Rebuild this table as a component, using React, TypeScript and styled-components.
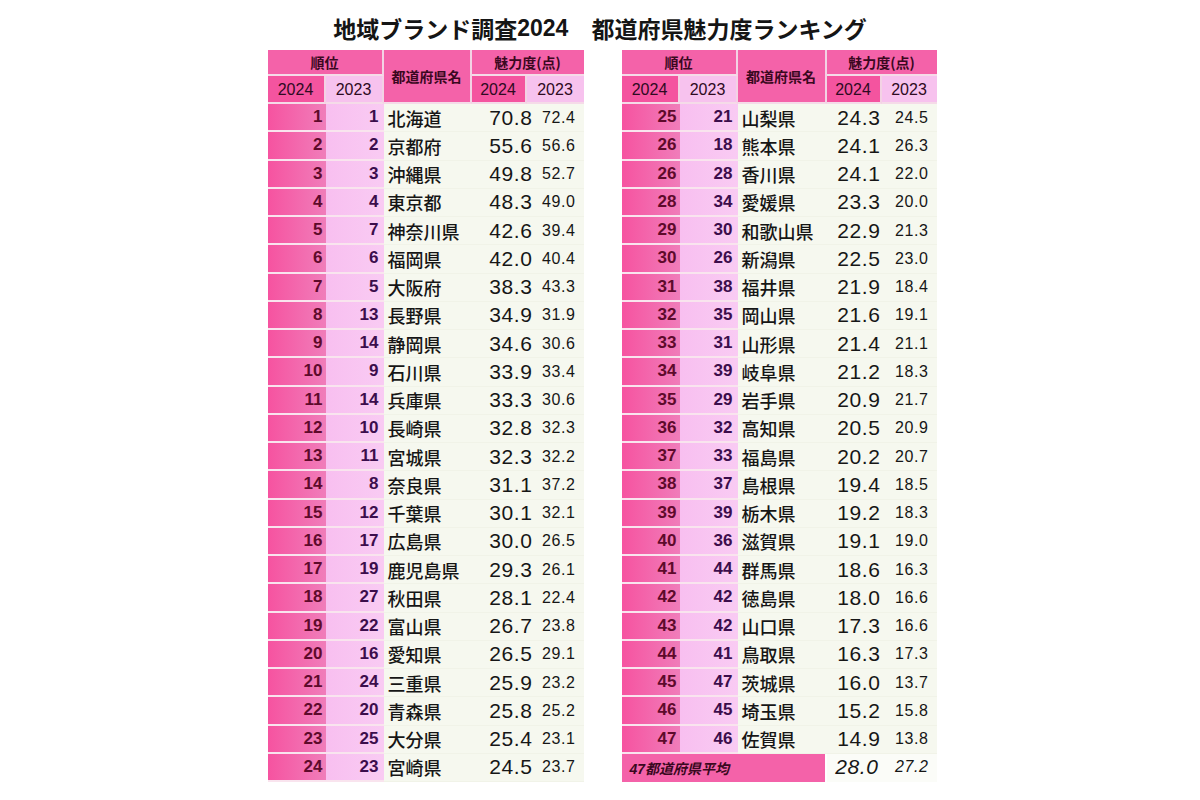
import React from "react";
import styled, { createGlobalStyle } from "styled-components";

const Global = createGlobalStyle`
  html, body { margin: 0; padding: 0; background: #ffffff; }
  body { font-family: "Liberation Sans", "Noto Sans CJK JP", sans-serif; }
`;

const Page = styled.div`
  width: 1200px;
  height: 800px;
  display: flex;
  flex-direction: column;
  align-items: center;
  overflow: hidden;
`;

const Title = styled.h1`
  margin: 0;
  height: 50px;
  display: flex;
  align-items: center;
  padding-top: 6px;
  box-sizing: border-box;
  font-family: "Noto Sans CJK JP", sans-serif;
  font-weight: 700;
  font-size: 23px;
  color: #151515;
  white-space: pre;
`;

const Num = styled.span`
  font-family: "Liberation Sans", sans-serif;
  font-weight: 700;
`;

const Tables = styled.div`
  display: flex;
  gap: 38px;
  margin-left: 4px;
`;

const Table = styled.div<{ $cols: string }>`
  display: grid;
  grid-template-columns: ${(p) => p.$cols};
  grid-template-rows: 26px 28px;
  grid-auto-rows: 28.25px;
`;

const Head = styled.div<{
  $tone?: "main" | "dark" | "light";
  $last?: boolean;
  $col: string;
  $row: string;
}>`
  box-sizing: border-box;
  grid-column: ${(p) => p.$col};
  grid-row: ${(p) => p.$row};
  display: flex;
  align-items: center;
  justify-content: center;
  background: ${(p) =>
    p.$tone === "light" ? "#f7c2ee" : p.$tone === "dark" ? "#f4549f" : "#f462a9"};
  border-right: ${(p) => (p.$last ? "0" : "2px solid #f3d2e4")};
  border-bottom: 2px solid #f5dbe8;
  color: #3a0820;
  font-family: "Noto Sans CJK JP", sans-serif;
  font-weight: 700;
  font-size: 14px;
`;

const HeadYear = styled(Head)`
  font-family: "Liberation Sans", sans-serif;
  font-weight: 400;
  font-size: 16px;
  color: #2e0a22;
  padding-top: 1px;
`;

const Rank = styled.div<{ $old?: boolean }>`
  box-sizing: border-box;
  display: flex;
  align-items: center;
  justify-content: flex-end;
  padding-right: ${(p) => (p.$old ? "5px" : "3px")};
  background: ${(p) =>
    p.$old
      ? "linear-gradient(90deg, #f8bff0, #f9cbf3)"
      : "linear-gradient(90deg, #f653a0, #f07dba)"};
  border-bottom: 2px solid #f9e4ee;
  color: ${(p) => (p.$old ? "#3c0d4c" : "#5e0a2b")};
  font-family: "Liberation Sans", sans-serif;
  font-weight: 700;
  font-size: 17px;
`;

const Name = styled.div`
  box-sizing: border-box;
  display: flex;
  align-items: center;
  padding-left: 4px;
  background: #f6f8ef;
  border-bottom: 1px solid #f1f3e8;
  color: #161616;
  font-family: "Noto Sans CJK JP", sans-serif;
  font-weight: 500;
  font-size: 18px;
  white-space: nowrap;
`;

const Score = styled.div<{ $big?: boolean; $col: string; $pad: number; $italic?: boolean; $plain?: boolean }>`
  box-sizing: border-box;
  grid-column: ${(p) => p.$col};
  display: flex;
  align-items: center;
  justify-content: flex-end;
  padding-right: ${(p) => p.$pad}px;
  background: ${(p) => (p.$plain ? "#fbfcf8" : "#f6f8ef")};
  border-bottom: 1px solid ${(p) => (p.$plain ? "#fbfcf8" : "#f1f3e8")};
  color: #161616;
  font-family: "Liberation Sans", sans-serif;
  font-style: ${(p) => (p.$italic ? "italic" : "normal")};
  font-size: ${(p) => (p.$big ? "21px" : "16px")};
  letter-spacing: 0.6px;
`;

const Footer = styled.div`
  box-sizing: border-box;
  grid-column: 1 / span 3;
  display: flex;
  align-items: center;
  padding-left: 8px;
  background: #f462a9;
  color: #3a0820;
  font-family: "Liberation Sans", "Noto Sans CJK JP", sans-serif;
  font-weight: 700;
  font-style: italic;
  font-size: 14px;
  margin-right: 2px;
`;

type Row = [number, number, string, string, string];

const left: Row[] = [
  [1, 1, "北海道", "70.8", "72.4"],
  [2, 2, "京都府", "55.6", "56.6"],
  [3, 3, "沖縄県", "49.8", "52.7"],
  [4, 4, "東京都", "48.3", "49.0"],
  [5, 7, "神奈川県", "42.6", "39.4"],
  [6, 6, "福岡県", "42.0", "40.4"],
  [7, 5, "大阪府", "38.3", "43.3"],
  [8, 13, "長野県", "34.9", "31.9"],
  [9, 14, "静岡県", "34.6", "30.6"],
  [10, 9, "石川県", "33.9", "33.4"],
  [11, 14, "兵庫県", "33.3", "30.6"],
  [12, 10, "長崎県", "32.8", "32.3"],
  [13, 11, "宮城県", "32.3", "32.2"],
  [14, 8, "奈良県", "31.1", "37.2"],
  [15, 12, "千葉県", "30.1", "32.1"],
  [16, 17, "広島県", "30.0", "26.5"],
  [17, 19, "鹿児島県", "29.3", "26.1"],
  [18, 27, "秋田県", "28.1", "22.4"],
  [19, 22, "富山県", "26.7", "23.8"],
  [20, 16, "愛知県", "26.5", "29.1"],
  [21, 24, "三重県", "25.9", "23.2"],
  [22, 20, "青森県", "25.8", "25.2"],
  [23, 25, "大分県", "25.4", "23.1"],
  [24, 23, "宮崎県", "24.5", "23.7"],
];

const right: Row[] = [
  [25, 21, "山梨県", "24.3", "24.5"],
  [26, 18, "熊本県", "24.1", "26.3"],
  [26, 28, "香川県", "24.1", "22.0"],
  [28, 34, "愛媛県", "23.3", "20.0"],
  [29, 30, "和歌山県", "22.9", "21.3"],
  [30, 26, "新潟県", "22.5", "23.0"],
  [31, 38, "福井県", "21.9", "18.4"],
  [32, 35, "岡山県", "21.6", "19.1"],
  [33, 31, "山形県", "21.4", "21.1"],
  [34, 39, "岐阜県", "21.2", "18.3"],
  [35, 29, "岩手県", "20.9", "21.7"],
  [36, 32, "高知県", "20.5", "20.9"],
  [37, 33, "福島県", "20.2", "20.7"],
  [38, 37, "島根県", "19.4", "18.5"],
  [39, 39, "栃木県", "19.2", "18.3"],
  [40, 36, "滋賀県", "19.1", "19.0"],
  [41, 44, "群馬県", "18.6", "16.3"],
  [42, 42, "徳島県", "18.0", "16.6"],
  [43, 42, "山口県", "17.3", "16.6"],
  [44, 41, "鳥取県", "16.3", "17.3"],
  [45, 47, "茨城県", "16.0", "13.7"],
  [46, 45, "埼玉県", "15.2", "15.8"],
  [47, 46, "佐賀県", "14.9", "13.8"],
];

function Ranking({
  rows,
  cols,
  pad24,
  pad23,
  footer,
}: {
  rows: Row[];
  cols: string;
  pad24: number;
  pad23: number;
  footer?: boolean;
}) {
  return (
    <Table $cols={cols}>
      <Head $col="1 / span 2" $row="1">順位</Head>
      <Head $col="3" $row="1 / span 2">都道府県名</Head>
      <Head $col="4 / span 3" $row="1" $last>
        魅力度(点)
      </Head>
      <HeadYear $tone="dark" $col="1" $row="2">2024</HeadYear>
      <HeadYear $tone="light" $col="2" $row="2">2023</HeadYear>
      <HeadYear $tone="dark" $col="4" $row="2">2024</HeadYear>
      <HeadYear $tone="light" $col="5 / span 2" $row="2" $last>
        2023
      </HeadYear>
      {rows.map((r, i) => (
        <React.Fragment key={i}>
          <Rank>{r[0]}</Rank>
          <Rank $old>{r[1]}</Rank>
          <Name>{r[2]}</Name>
          <Score $big $col="4 / span 2" $pad={pad24}>
            {r[3]}
          </Score>
          <Score $col="6" $pad={pad23}>{r[4]}</Score>
        </React.Fragment>
      ))}
      {footer && (
        <>
          <Footer>47都道府県平均</Footer>
          <Score $big $italic $plain $col="4 / span 2" $pad={pad24 + 2}>
            28.0
          </Score>
          <Score $italic $plain $col="6" $pad={pad23}>
            27.2
          </Score>
        </>
      )}
    </Table>
  );
}

export default function App() {
  return (
    <>
      <Global />
      <Page>
        <Title>
          地域ブランド調査<Num>2024</Num>　都道府県魅力度ランキング
        </Title>
        <Tables>
          <Ranking rows={left} cols="58px 58px 88px 55px 6px 51px" pad24={0} pad23={8} />
          <Ranking rows={right} cols="58px 58px 89px 55px 0px 55px" pad24={1} pad23={8} footer />
        </Tables>
      </Page>
    </>
  );
}
